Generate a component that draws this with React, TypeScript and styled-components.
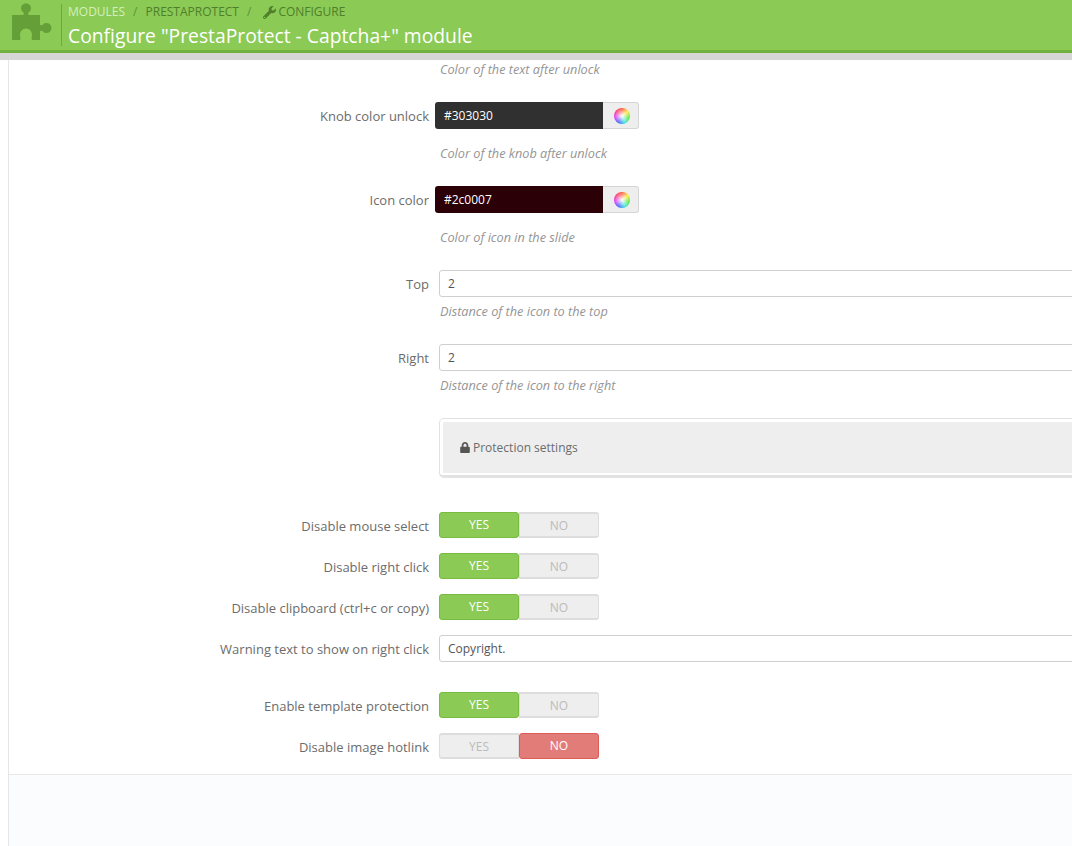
import React from "react";
import styled, { createGlobalStyle } from "styled-components";
import { FaLock, FaWrench } from "react-icons/fa";

const GlobalStyle = createGlobalStyle`
  html, body {
    margin: 0;
    padding: 0;
    height: 100%;
    overflow: hidden;
    background: #fff;
    font-family: "Open Sans", "Liberation Sans", sans-serif;
    font-size: 13px;
    color: #666;
  }
`;

const Page = styled.div`
  width: 1072px;
  height: 846px;
  overflow: hidden;
  display: flex;
  flex-direction: column;
`;

const Header = styled.header`
  height: 50px;
  flex: none;
  display: flex;
  background: #8bca55;
  border-bottom: 3px solid #72b13f;
  box-sizing: content-box;
`;

const HeaderIcon = styled.div`
  width: 61px;
  flex: none;
  padding: 2px 0 0 12px;
  box-sizing: border-box;
  line-height: 0;
`;

const HeaderText = styled.div`
  margin-top: 4px;
  height: 42px;
  border-left: 1px solid #6ea83f;
  padding-left: 6px;
`;

const Breadcrumb = styled.div`
  display: flex;
  align-items: center;
  height: 16px;
  font-size: 12px;
  line-height: 16px;
  color: #4f7f2b;
`;

const Crumb = styled.span<{ $light?: boolean }>`
  color: ${(p) => (p.$light ? "#d4efbd" : "#4f7f2b")};
  display: inline-flex;
  align-items: center;
  gap: 2px;
`;

const Slash = styled.span<{ $wide?: boolean }>`
  margin: ${(p) => (p.$wide ? "0 12px 0 8px" : "0 8px")};
  color: #5f9234;
`;

const Title = styled.h2`
  margin: 4px 0 0;
  font-size: 19.3px;
  line-height: 24px;
  font-weight: 400;
  color: #fff;
  white-space: nowrap;
`;

const GreyBar = styled.div`
  height: 7px;
  flex: none;
  background: #d6d6d6;
`;

const Body = styled.div`
  flex: 1;
  display: flex;
  flex-direction: column;
  margin-left: 8px;
  border-left: 1px solid #e6e6e6;
`;

const Form = styled.div`
  height: 714px;
  flex: none;
  background: #fff;
  border-bottom: 1px solid #e8e8e8;
  box-sizing: content-box;
`;

const Footer = styled.div`
  flex: 1;
  background: #fbfcfe;
`;

const Row = styled.div<{ $mb: number }>`
  display: grid;
  grid-template-columns: 420px 1fr;
  column-gap: 10px;
  margin-bottom: ${(p) => p.$mb}px;
`;

const Label = styled.label`
  height: 26px;
  text-align: right;
  font-size: 13px;
  line-height: 28px;
  color: #6c6c6c;
  white-space: nowrap;
`;

const Help = styled.div<{ $top: number }>`
  grid-column: 2;
  margin: ${(p) => p.$top}px 0 0 1px;
  font-size: 12.7px;
  font-style: italic;
  line-height: 16px;
  color: #959595;
  white-space: nowrap;
`;

const TextInput = styled.div`
  width: 800px;
  height: 27px;
  box-sizing: border-box;
  border: 1px solid #cfcfcf;
  border-radius: 3px;
  background: #fff;
  padding: 0 8px;
  font-size: 12px;
  line-height: 26px;
  color: #555;
`;

const ColorGroup = styled.div`
  display: flex;
  width: 204px;
  height: 27px;
  margin-left: -4px;
`;

const ColorValue = styled.div<{ $bg: string }>`
  width: 168px;
  height: 27px;
  box-sizing: border-box;
  background: ${(p) => p.$bg};
  border-radius: 3px 0 0 3px;
  padding-left: 9px;
  font-size: 12px;
  line-height: 28px;
  color: #fff;
`;

const ColorButton = styled.div`
  flex: 1;
  display: flex;
  align-items: center;
  justify-content: center;
  padding-left: 2px;
  background: #eee;
  border: 1px solid #d5d5d5;
  border-left: none;
  border-radius: 0 3px 3px 0;
`;

const ColorWheel = styled.span`
  width: 16px;
  height: 16px;
  border-radius: 50%;
  background: radial-gradient(circle, #fff 0%, rgba(255, 255, 255, 0) 70%),
    conic-gradient(#ff5a3c, #ffe83c, #5ce63c, #3ce6d8, #3c6cff, #d83cff, #ff3c7c, #ff5a3c);
`;

const Panel = styled.div`
  width: 800px;
  height: 60px;
  box-sizing: border-box;
  border: 1px solid #e2e2e2;
  border-bottom-width: 3px;
  border-radius: 5px;
  padding: 3px;
  background: #fff;
`;

const PanelHeading = styled.div`
  height: 51px;
  background: #eee;
  display: flex;
  align-items: center;
  gap: 3px;
  padding-left: 17px;
  font-size: 12px;
  color: #6c6c6c;
`;

const LockIcon = styled(FaLock)`
  width: 10px;
  height: 11px;
  color: #555;
`;

const Switch = styled.div`
  display: flex;
  width: 160px;
  height: 26px;
`;

const SwitchOption = styled.div<{ $on: boolean; $kind: "yes" | "no" }>`
  flex: 1;
  box-sizing: border-box;
  text-align: center;
  font-size: 12px;
  font-weight: 500;
  line-height: 23px;
  border-radius: ${(p) => (p.$kind === "yes" ? "3px 0 0 3px" : "0 3px 3px 0")};
  ${(p) =>
    !p.$on
      ? `background: #eee; color: #bbb; border: 1px solid #ddd; border-width: 2px 1px;`
      : p.$kind === "yes"
      ? `background: #8bca55; color: #fff; border: 1px solid #78bb3e; border-radius: 3px;`
      : `background: #e27c79; color: #fff; border: 1px solid #dd5b57; border-radius: 3px;`}
`;

const PuzzleLogo = () => (
  <svg width="41" height="39" viewBox="12 2 41 39" fill="#659f37">
    <path d="M12 15H23C24 15 24 13.5 23.5 12.5A5 5 0 1 1 28.5 12.5C28 13.5 28 15 29 15H40V24C40 25.5 41.5 25.5 42.5 25A5 5 0 1 1 42.5 31C41.5 30.5 40 30.5 40 32V40H32C31 38 32 36.5 32 34.5A6 6 0 0 0 20 34.5C20 36.5 21 38 20 40H12Z" />
  </svg>
);

const YesNo = ({ value }: { value: boolean }) => (
  <Switch>
    <SwitchOption $kind="yes" $on={value}>YES</SwitchOption>
    <SwitchOption $kind="no" $on={!value}>NO</SwitchOption>
  </Switch>
);

const App: React.FC = () => {
  return (
    <Page>
      <GlobalStyle />
      <Header>
        <HeaderIcon>
          <PuzzleLogo />
        </HeaderIcon>
        <HeaderText>
          <Breadcrumb>
            <Crumb $light>MODULES</Crumb>
            <Slash>/</Slash>
            <Crumb>PRESTAPROTECT</Crumb>
            <Slash $wide>/</Slash>
            <Crumb>
              <FaWrench size={13} /> CONFIGURE
            </Crumb>
          </Breadcrumb>
          <Title>Configure "PrestaProtect - Captcha+" module</Title>
        </HeaderText>
      </Header>
      <GreyBar />
      <Body>
        <Form>
          <Row $mb={25}>
            <Help $top={1}>Color of the text after unlock</Help>
          </Row>
          <Row $mb={25}>
            <Label>Knob color unlock</Label>
            <ColorGroup>
              <ColorValue $bg="#303030">#303030</ColorValue>
              <ColorButton>
                <ColorWheel />
              </ColorButton>
            </ColorGroup>
            <Help $top={16}>Color of the knob after unlock</Help>
          </Row>
          <Row $mb={25}>
            <Label>Icon color</Label>
            <ColorGroup>
              <ColorValue $bg="#2c0007">#2c0007</ColorValue>
              <ColorButton>
                <ColorWheel />
              </ColorButton>
            </ColorGroup>
            <Help $top={16}>Color of icon in the slide</Help>
          </Row>
          <Row $mb={25}>
            <Label>Top</Label>
            <TextInput>2</TextInput>
            <Help $top={6}>Distance of the icon to the top</Help>
          </Row>
          <Row $mb={25}>
            <Label>Right</Label>
            <TextInput>2</TextInput>
            <Help $top={6}>Distance of the icon to the right</Help>
          </Row>
          <Row $mb={34}>
            <span />
            <Panel>
              <PanelHeading>
                <LockIcon />
                Protection settings
              </PanelHeading>
            </Panel>
          </Row>
          <Row $mb={15}>
            <Label>Disable mouse select</Label>
            <YesNo value />
          </Row>
          <Row $mb={15}>
            <Label>Disable right click</Label>
            <YesNo value />
          </Row>
          <Row $mb={15}>
            <Label>Disable clipboard (ctrl+c or copy)</Label>
            <YesNo value />
          </Row>
          <Row $mb={30}>
            <Label>Warning text to show on right click</Label>
            <TextInput>Copyright.</TextInput>
          </Row>
          <Row $mb={15}>
            <Label>Enable template protection</Label>
            <YesNo value />
          </Row>
          <Row $mb={0}>
            <Label>Disable image hotlink</Label>
            <YesNo value={false} />
          </Row>
        </Form>
        <Footer />
      </Body>
    </Page>
  );
};

export default App;
